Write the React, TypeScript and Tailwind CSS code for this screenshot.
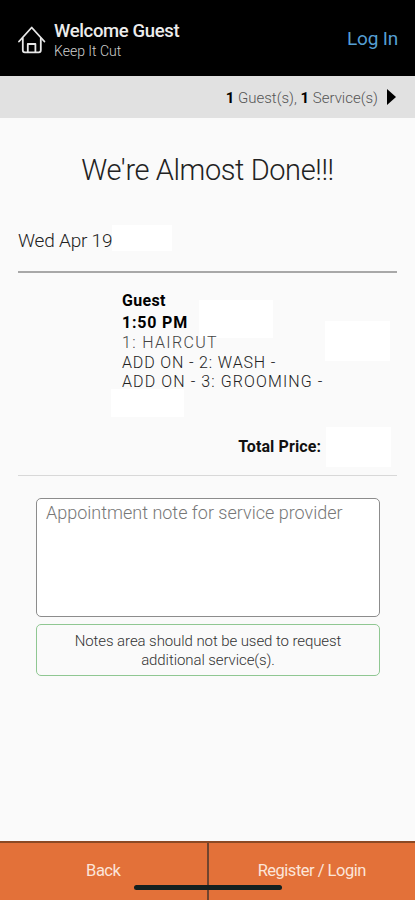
import type { ReactNode } from "react";

function HomeIcon() {
  return (
    <svg
      viewBox="0 0 28 28"
      className="h-7 w-7 shrink-0"
      fill="none"
      stroke="#e8e8e8"
      strokeWidth="1.8"
      strokeLinecap="round"
      strokeLinejoin="round"
    >
      <path d="M1 15.5 13.7 1.5l12.7 14" />
      <path d="M4.8 12.5v11.8a2 2 0 0 0 2 2h14a2 2 0 0 0 2-2V12.5" />
      <path d="M9.8 26V18h7.6v8" />
    </svg>
  );
}

function Header() {
  return (
    <header className="flex h-[76px] items-start bg-black pl-[18px] pr-[17px]">
      <div className="mt-[26px]">
        <HomeIcon />
      </div>
      <div className="ml-2 mt-5 flex-1">
        <h1 className="text-[18.5px] font-medium leading-[22px] tracking-[-0.35px] text-[#ececec]">Welcome Guest</h1>
        <p className="text-sm font-light leading-[18px] text-[#d0d0d0]">Keep It Cut</p>
      </div>
      <a href="#" className="mt-[27px] text-[19px] leading-6 tracking-[-0.2px] text-[#559fd3]">
        Log In
      </a>
    </header>
  );
}

function SummaryBar() {
  return (
    <div className="flex h-[42px] items-center justify-end bg-[#e1e1e1] pr-[19px] pt-px">
      <p className="pt-px text-[15px] font-light text-[#555]">
        <b className="font-bold text-black">1</b> Guest(s), <b className="font-bold text-black">1</b> Service(s)
      </p>
      <svg viewBox="0 0 9 16" className="mb-px ml-[9px] h-4 w-[9px]">
        <path d="M0 0 9 8 0 16Z" fill="#000" />
      </svg>
    </div>
  );
}

function Appointment() {
  return (
    <section className="relative mx-[18px] h-[203px] border-b border-[#d8d8d8]">
      <div className="absolute left-[181px] top-[27px] h-[38px] w-[74px] bg-white" />
      <div className="absolute left-[307px] top-[48px] h-[40px] w-[65px] bg-white" />
      <div className="absolute left-[93px] top-[116px] h-[28px] w-[73px] bg-white" />
      <div className="relative ml-[104px] pt-[17px] text-[16px] text-black">
        <h3 className="leading-[22px] font-bold tracking-[0.3px]">Guest</h3>
        <p className="leading-[21px] font-bold tracking-[0.8px]">1:50 PM</p>
        <p className="leading-[20px] font-light tracking-[1.35px] text-[#444]">1: HAIRCUT</p>
        <p className="leading-[19px] font-light tracking-[0.85px] text-[#222]">ADD ON - 2: WASH -</p>
        <p className="leading-[19px] font-light tracking-[1.1px] text-[#222]">ADD ON - 3: GROOMING -</p>
      </div>
      <div className="mt-9 flex items-center justify-end pr-[6px]">
        <p className="text-[16px] font-bold leading-10 tracking-[0.1px] text-[#111]">Total Price:</p>
        <div className="ml-[5px] h-10 w-[65px] bg-white" />
      </div>
    </section>
  );
}

function FooterButton({ children }: { children: ReactNode }) {
  return (
    <button className="flex-1 text-[16.5px] tracking-[-0.5px] text-[#fce5d9]">
      {children}
    </button>
  );
}

export default function App() {
  return (
    <div className="flex h-[900px] w-full flex-col overflow-hidden bg-[#fafafa] font-[Roboto,sans-serif]">
      <Header />
      <SummaryBar />
      <main className="flex-1">
        <h2 className="pt-[33px] text-center text-[29px] font-light leading-[38px] tracking-[-0.4px] text-[#222]">
          We're Almost Done!!!
        </h2>
        <div className="mx-[18px] mt-[36px] flex h-[48px] items-start border-b-2 border-[#a8a8a8]">
          <p className="text-[19px] font-light leading-8 tracking-[-0.2px] text-[#222]">Wed Apr 19</p>
          <div className="h-[26px] max-w-[60px] flex-1 bg-white" />
        </div>
        <Appointment />
        <div className="ml-[36px] mr-[35px] mt-[22px] flex flex-col gap-[7px]">
          <textarea
            className="h-[119px] resize-none rounded-[5px] border border-[#8c8c8c] bg-white px-[9px] py-[3px] text-[18px] font-light leading-[22px] placeholder:text-[#777]"
            placeholder="Appointment note for service provider"
          />
          <div className="flex h-[52px] items-center justify-center rounded-[5px] border border-[#8fc792] pt-[2px] text-center text-[15px] font-light leading-[19px] tracking-[-0.08px] text-[#333]">
            <p>
              Notes area should not be used to request
              <br />
              additional service(s).
            </p>
          </div>
        </div>
      </main>
      <footer className="relative flex h-[59px] border-t-2 border-[#8b4924] bg-[#e37139]">
        <FooterButton>Back</FooterButton>
        <div className="w-[2px] bg-[#70442f]" />
        <FooterButton>Register / Login</FooterButton>
        <div className="absolute bottom-[10px] left-[134px] h-[5px] w-[148px] rounded-full bg-[#132020]" />
      </footer>
    </div>
  );
}
